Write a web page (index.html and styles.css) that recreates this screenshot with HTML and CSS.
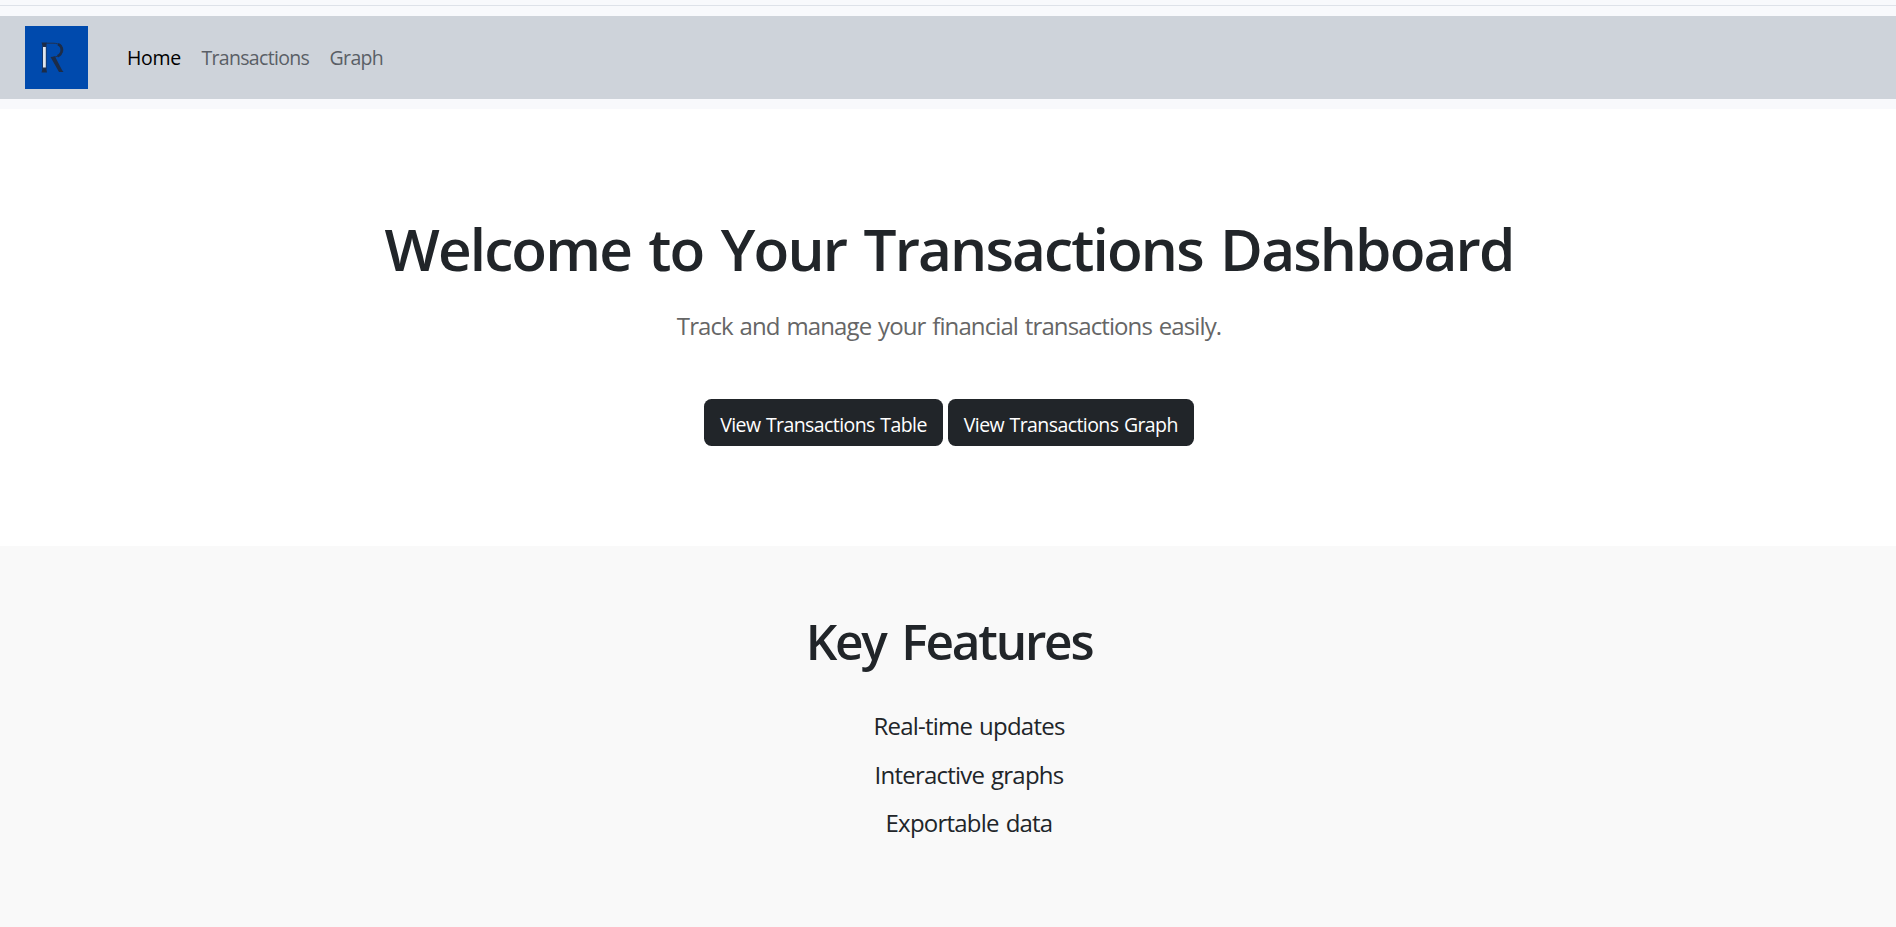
FILE: index.html
```
<!DOCTYPE html>
<html lang="en">
<head>
<meta charset="utf-8">
<title>Transactions Dashboard</title>
<link rel="stylesheet" href="styles.css">
</head>
<body>
<header class="header">
  <nav class="navbar">
    <a class="brand" href="#">
      <svg width="63" height="63" viewBox="0 0 63 63" aria-label="R">
        <rect width="63" height="63" fill="#004aad"/>
        <path d="M22 17.2H28C41 17.2 41 30.500 28.500 31" fill="none" stroke="#20314f" stroke-width="1"/>
        <path d="M33 18.200C38 20 38 28 32.500 30.200" fill="none" stroke="#1c2c48" stroke-width="2.600"/>
        <path d="M25.500 31L30 30.500L37 44L38.500 46H34Z" fill="#1c2c48"/>
        <path d="M16.500 16.500H22L21.200 20H17.600ZM17.600 42H21.200L22 46.500H16.500Z" fill="#1c2c48"/>
        <rect x="17.300" y="19.500" width="4.200" height="23.500" fill="#20314f"/>
        <rect x="18" y="21" width="2.800" height="20.500" fill="#dfe6ee"/>
      </svg>
    </a>
    <ul class="nav-list">
      <li><a class="nav-link active" href="#">Home</a></li>
      <li><a class="nav-link" href="#">Transactions</a></li>
      <li><a class="nav-link" href="#">Graph</a></li>
    </ul>
  </nav>
</header>
<main>
  <section class="hero">
    <h1 class="hero-title">Welcome to Your Transactions Dashboard</h1>
    <p class="hero-text">Track and manage your financial transactions easily.</p>
    <div class="actions">
      <a class="button" href="#">View Transactions Table</a>
      <a class="button" href="#">View Transactions Graph</a>
    </div>
  </section>
  <section class="features">
    <h2 class="features-title">Key Features</h2>
    <ul class="feature-list">
      <li>Real-time updates</li>
      <li>Interactive graphs</li>
      <li>Exportable data</li>
    </ul>
  </section>
</main>
</body>
</html>
```
FILE: styles.css
```
* { box-sizing: border-box; }
body {
  margin: 0;
  background: #fff;
  color: #212529;
  font-family: "Segoe UI", "Open Sans", "Noto Sans", sans-serif;
  font-size: 20px;
  overflow: hidden;
}
a { text-decoration: none; }
ul { margin: 0; list-style: none; }
.header {
  height: 109px;
  padding: 5px 0 10px;
  background: #f8f9fc;
}
.header::before {
  content: "";
  display: block;
  height: 1px;
  margin-bottom: 10px;
  background: #dee2e9;
}
.navbar {
  display: flex;
  align-items: center;
  height: 83px;
  padding-left: 25px;
  background: #ced3da;
}
.brand { display: flex; margin-right: 39px; }
.nav-list { display: flex; gap: 20.500px; padding: 0; line-height: 31px; }
.nav-link { display: block; color: #5a5f66; font-size: 19.500px; letter-spacing: -0.68px; }
.active { color: #000; letter-spacing: -0.3px; }
.hero {
  height: 437px;
  padding: 103px 0 0 2px;
  text-align: center;
}
.hero-title {
  margin: 0;
  font-size: 58.500px;
  font-weight: 600;
  letter-spacing: -1.86px;
  word-spacing: 4px;
  line-height: 72px;
}
.hero-text {
  margin: 23px 0 54px;
  color: #666;
  font-size: 24px;
  letter-spacing: -0.9px;
  word-spacing: 1.5px;
  line-height: 38px;
}
.actions { display: flex; justify-content: center; gap: 5px; }
.button {
  height: 47px;
  padding: 0 16px;
  border-radius: 7.500px;
  background: #212529;
  color: #fff;
  font-size: 19.500px;
  letter-spacing: -0.58px;
  word-spacing: 1px;
  line-height: 51px;
  white-space: nowrap;
}
.features {
  height: 381px;
  padding: 65px 0 0 2px;
  background: #f9f9f9;
  text-align: center;
}
.features-title {
  margin: 0 0 37px;
  font-size: 49.500px;
  font-weight: 600;
  letter-spacing: -2.2px;
  word-spacing: 5px;
  line-height: 60px;
}
.feature-list { padding-left: 40px; font-size: 24px; letter-spacing: -0.78px; word-spacing: 1.5px; line-height: 36px; }
.feature-list li { margin-bottom: 12.500px; }
```
